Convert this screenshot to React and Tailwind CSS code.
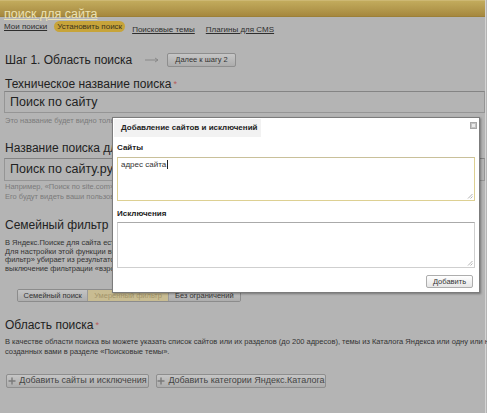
// App.jsx — экран "Установить поиск" с открытым диалогом добавления сайтов.
import React from 'react';

const font = "font-['Liberation_Sans',Arial,sans-serif]";

const NavLink = ({ children }) => (
    <span className="text-[8px] leading-[13px] text-[#2e2e2e] underline">{children}</span>
);

const GrayButton = ({ children, className = '' }) => (
    <div
        className={`h-[14px] flex items-center justify-center border border-[#8e8e8e] rounded-[2px] bg-gradient-to-b from-[#c6c6c6] to-[#acacac] text-[#333] ${className}`}
    >
        {children}
    </div>
);

const Label = ({ children, star }) => (
    <div className="h-[14px] text-[12px] leading-[14px] text-[#222] pl-[5px] whitespace-nowrap">
        {children}
        {star && <span className="text-[#b85a5a] text-[9px] align-top ml-[2px]">*</span>}
    </div>
);

const Hint = ({ children }) => (
    <div className="h-[10px] text-[7.5px] leading-[10px] text-[#7b7b7b] pl-[5px] whitespace-nowrap">
        {children}
    </div>
);

const Grip = () => (
    <svg className="absolute right-[1px] bottom-[1px]" width="6" height="6" viewBox="0 0 6 6">
        <path d="M5.5 1 L1 5.5 M5.5 3.5 L3.5 5.5" stroke="#a0a0a0" strokeWidth="0.8" />
    </svg>
);

const Tab = ({ children, active, className = '' }) => (
    <div
        className={`h-full flex items-center justify-center text-[7.5px] ${
            active
                ? 'bg-[#c8bc92] text-[#a3946a]'
                : 'bg-gradient-to-b from-[#c4c4c4] to-[#adadad] text-[#333]'
        } ${className}`}
    >
        {children}
    </div>
);

const Plus = () => (
    <svg width="8" height="8" viewBox="0 0 8 8" className="mr-[3px]">
        <path d="M4 0.5 V7.5 M0.5 4 H7.5" stroke="#7a7a7a" strokeWidth="1.4" />
    </svg>
);

export default function App() {
    return (
        <div className={`relative w-[487px] h-[413px] overflow-hidden bg-[#b4b4b4] ${font}`}>
            <div className="w-[486px] h-full border-r border-[#d4d4d4] flex flex-col">
                {/* шапка */}
                <div className="h-[17px] bg-gradient-to-b from-[#c2ab5c] via-[#b49a4e] to-[#a6883e] border-t border-[#cdb873] border-b border-b-[#9c8038] pl-[4px]">
                    <span className="text-[12.5px] leading-[15px] text-[#ebe1b2] underline">поиск для сайта</span>
                </div>

                {/* меню */}
                <div className="mt-[3px] h-[13px] flex items-center pl-[4px]">
                    <NavLink>Мои поиски</NavLink>
                    <span className="ml-[7px] w-[71px] h-[11px] rounded-full bg-[#c7a43a] text-[8px] leading-[11px] text-[#3b331c] text-center">
                        Установить поиск
                    </span>
                    <span className="ml-[7px]">
                        <NavLink>Поисковые темы</NavLink>
                    </span>
                    <span className="ml-[11px]">
                        <NavLink>Плагины для CMS</NavLink>
                    </span>
                </div>

                {/* шаг 1 */}
                <div className="mt-[20px] h-[14px] flex items-center pl-[5px]">
                    <span className="w-[140px] text-[12px] leading-[14px] text-[#222] whitespace-nowrap">
                        Шаг 1. Область поиска
                    </span>
                    <svg width="14" height="6" viewBox="0 0 14 6" className="mr-[8px]">
                        <path d="M0 3 H12.5 M10 1 L13 3 L10 5" stroke="#7e7e7e" strokeWidth="0.8" fill="none" />
                    </svg>
                    <GrayButton className="w-[69px] text-[7.5px]">Далее к шагу 2</GrayButton>
                </div>

                <div className="mt-[10px]">
                    <Label star>Техническое название поиска</Label>
                </div>
                <div className="ml-[4px] h-[22px] border border-[#959595] border-t-[#848484] flex items-center pl-[5px] text-[12.5px] text-[#222]">
                    Поиск по сайту
                </div>
                <div className="mt-[3px]">
                    <Hint>Это название будет видно только вам и нигде не будет отображаться</Hint>
                </div>

                <div className="mt-[15px]">
                    <Label>Название поиска для пользователей</Label>
                </div>
                <div className="mt-[3px] ml-[4px] h-[23px] border border-[#959595] border-t-[#848484] flex items-center pl-[5px] text-[12.5px] text-[#222]">
                    Поиск по сайту.ру
                </div>
                <div className="mt-[1px]">
                    <Hint>Например, «Поиск по site.com» или «Поиск по магазину»</Hint>
                    <Hint>Его будут видеть ваши пользователи на странице результатов поиска</Hint>
                </div>

                {/* семейный фильтр */}
                <div className="mt-[16px]">
                    <Label>Семейный фильтр</Label>
                </div>
                <div className="mt-[7px] h-[34px] pl-[5px] text-[7.5px] leading-[8.5px] text-[#333] whitespace-nowrap">
                    <div>В Яндекс.Поиске для сайта есть возможность исключить из результатов поиска страницы для взрослых.</div>
                    <div>Для настройки этой функции выберите нужный режим. Режим «Умеренный фильтр» установлен по умолчанию. «Семейный</div>
                    <div>фильтр» убирает из результатов поиска всё, что связано с непристойностями. «Без ограничений» означает полное</div>
                    <div>выключение фильтрации «взрослого» контента в результатах поиска.</div>
                </div>
                <div className="mt-[16px] ml-[17px] w-[224px] h-[13px] flex border border-[#8c8c8c] rounded-[2px] overflow-hidden">
                    <Tab className="w-[71px] border-r border-[#9a9a9a]">Семейный поиск</Tab>
                    <Tab active className="w-[80px]">Умеренный фильтр</Tab>
                    <Tab className="w-[73px] border-l border-[#9a9a9a]">Без ограничений</Tab>
                </div>

                {/* область поиска */}
                <div className="mt-[16px]">
                    <Label star>Область поиска</Label>
                </div>
                <div className="mt-[5px] pl-[5px] text-[7.5px] leading-[9.5px] text-[#333] whitespace-nowrap">
                    <div>
                        В качестве области поиска вы можете указать список сайтов или их разделов (до 200 адресов), темы из Каталога Яндекса или одну или несколько тем,
                    </div>
                    <div>созданных вами в разделе «Поисковые темы».</div>
                </div>
                <div className="mt-[18px] flex pl-[6px] gap-[7px]">
                    <GrayButton className="w-[143px] text-[9px] text-[#444]">
                        <Plus />
                        Добавить сайты и исключения
                    </GrayButton>
                    <GrayButton className="w-[170px] text-[9px] text-[#444]">
                        <Plus />
                        Добавить категории Яндекс.Каталога
                    </GrayButton>
                </div>
            </div>

            {/* диалог */}
            <div className="absolute left-[112px] top-[117px] w-[368px] h-[176px] bg-white border border-[#7c7c7c] shadow-[1px_1px_2px_rgba(0,0,0,0.35)]">
                <div className="flex justify-between">
                    <div className="mt-[1px] ml-[1px] w-[147px] h-[18px] bg-[#f2f2f2] pl-[7px] text-[8px] leading-[18px] font-bold text-[#222] whitespace-nowrap">
                        Добавление сайтов и исключений
                    </div>
                    <div className="mt-[4px] mr-[2px] w-[7px] h-[7px] bg-[#c4c4c4] border border-[#a8a8a8] flex items-center justify-center">
                        <div className="w-[3px] h-[3px] bg-[#ececec]" />
                    </div>
                </div>
                <div className="px-[4px]">
                    <div className="mt-[6px] h-[10px] text-[8px] leading-[10px] font-bold text-[#222]">Сайты</div>
                    <div className="relative mt-[4px] w-[358px] h-[44px] border border-[#ddd092] border-t-[#c9c09a] pl-[3px] pt-[2px] text-[8px] leading-[10px] text-[#333]">
                        адрес сайта
                        <span className="inline-block w-px h-[9px] bg-[#222] align-middle ml-px" />
                        <Grip />
                    </div>
                    <div className="mt-[8px] h-[10px] text-[8px] leading-[10px] font-bold text-[#222]">Исключения</div>
                    <div className="relative mt-[3px] w-[358px] h-[46px] border border-[#cfcfcf] border-t-[#aaaaaa]">
                        <Grip />
                    </div>
                    <div className="mt-[7px] flex justify-end pr-[2px]">
                        <div className="w-[47px] h-[13px] border border-[#adadad] rounded-[2px] bg-gradient-to-b from-white to-[#e6e6e6] text-[7.5px] leading-[11px] text-center text-[#333]">
                            Добавить
                        </div>
                    </div>
                </div>
            </div>
        </div>
    );
}
